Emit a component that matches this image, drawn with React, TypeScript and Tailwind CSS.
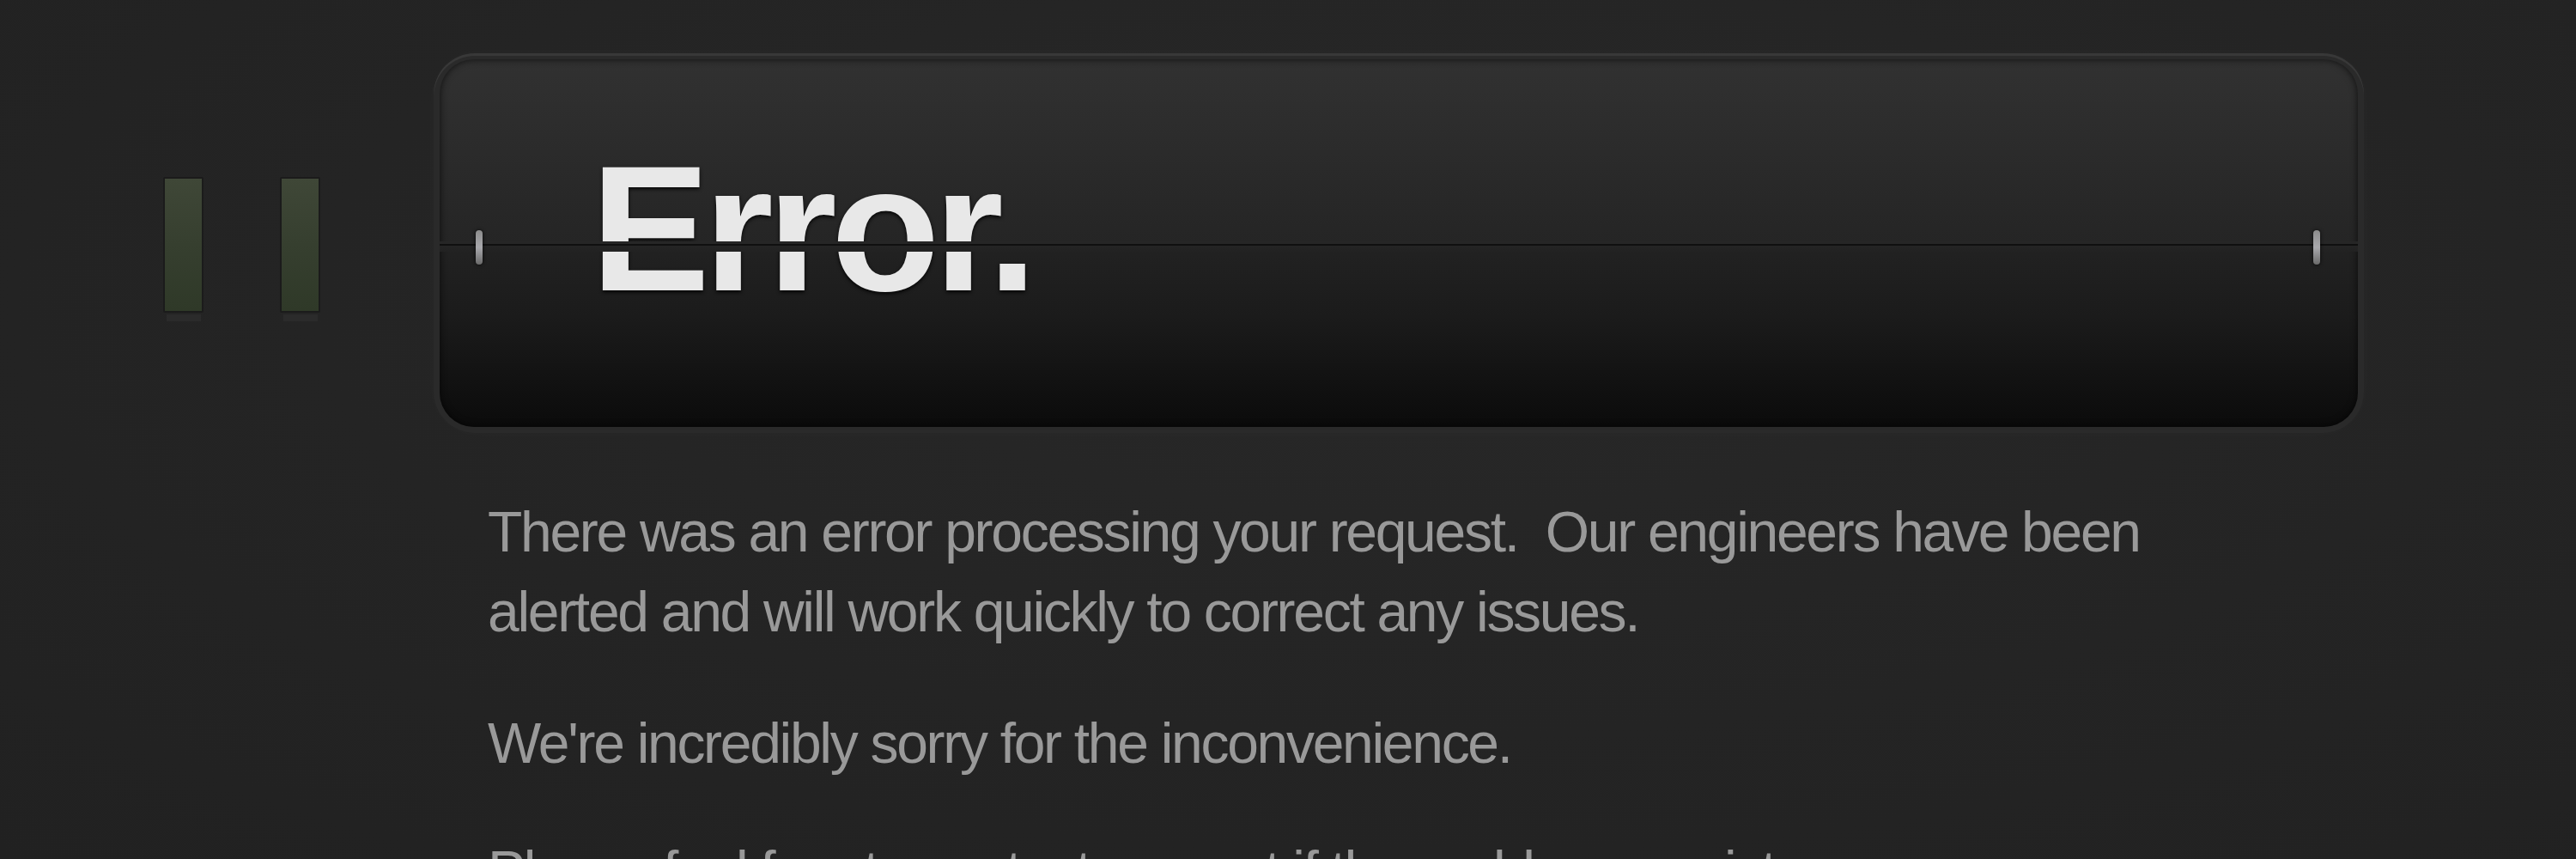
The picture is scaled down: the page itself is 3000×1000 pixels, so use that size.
import React from 'react';

const bars = [0, 1];

export default function App() {
  return (
    <div className="h-[1000px] w-full overflow-hidden bg-[radial-gradient(ellipse_at_55%_35%,#282828_0%,#242424_55%,#212121_100%)] pt-[62px] font-['Liberation_Sans',Arial,sans-serif]">
      <div className="flex items-start">
        {/* the two little green meters on the left */}
        <div className="ml-[190px] mt-[144px] flex gap-[89px]">
          {bars.map((b) => (
            <div key={b} className="flex flex-col items-center">
              <div className="h-[158px] w-[47px] rounded-[2px] bg-[#1b1b1b] p-[2px]">
                <div className="h-full w-full bg-[linear-gradient(to_bottom,#3f4737_0%,#363f2f_50%,#2f3928_100%)]" />
              </div>
              <div className="mt-[2px] h-[8px] w-[40px] bg-[#2b2b2b]" />
            </div>
          ))}
        </div>

        <div className="ml-[132px] w-[2248px]">
          {/* flip panel */}
          <div className="rounded-[48px] bg-[#2a2a2a] p-[7px] shadow-[inset_0_3px_0_#383838,0_0_30px_rgba(255,255,255,0.02)]">
            <div className="relative h-[428px] overflow-hidden rounded-[40px] bg-[linear-gradient(to_bottom,#313131_0px,#252525_215px,#222222_217px,#1b1b1b_300px,#0b0b0b_428px)] shadow-[inset_0_0_8px_rgba(0,0,0,0.7)]">
              <div className="pl-[176px] pt-[93px] text-[208px] font-bold leading-none tracking-[-7px] text-[#e8e8e8] [text-shadow:0_2px_4px_rgba(0,0,0,0.9)]">
                Error.
              </div>

              {/* split line across the middle */}
              <div className="absolute left-0 right-0 top-[212px] h-[12px] bg-[linear-gradient(to_bottom,#262626_0px,#262626_3px,#101010_3px,#101010_5px,#242424_5px,#222222_12px)]" />

              <div className="absolute left-[42px] top-[199px] h-[40px] w-[8px] rounded-full bg-[linear-gradient(to_bottom,#8c8c8c,#a8a8ac_50%,#6a6a6a)] shadow-[0_0_4px_rgba(0,0,0,0.8)]" />
              <div className="absolute right-[44px] top-[199px] h-[40px] w-[8px] rounded-full bg-[linear-gradient(to_bottom,#8c8c8c,#a8a8ac_50%,#6a6a6a)] shadow-[0_0_4px_rgba(0,0,0,0.8)]" />
            </div>
          </div>

          <div className="mt-[69px] max-w-[2100px] pl-[63px] text-[66px] leading-[93px] tracking-[-2.3px] text-[#999999]">
            <p>There was an error processing your request.&nbsp; Our engineers have been alerted and will work quickly to correct any issues.</p>
            <p className="mt-[60px]">We're incredibly sorry for the inconvenience.</p>
            <p className="mt-[56px]">Please feel free to contact support if the problem persists.</p>
          </div>
        </div>
      </div>
    </div>
  );
}
